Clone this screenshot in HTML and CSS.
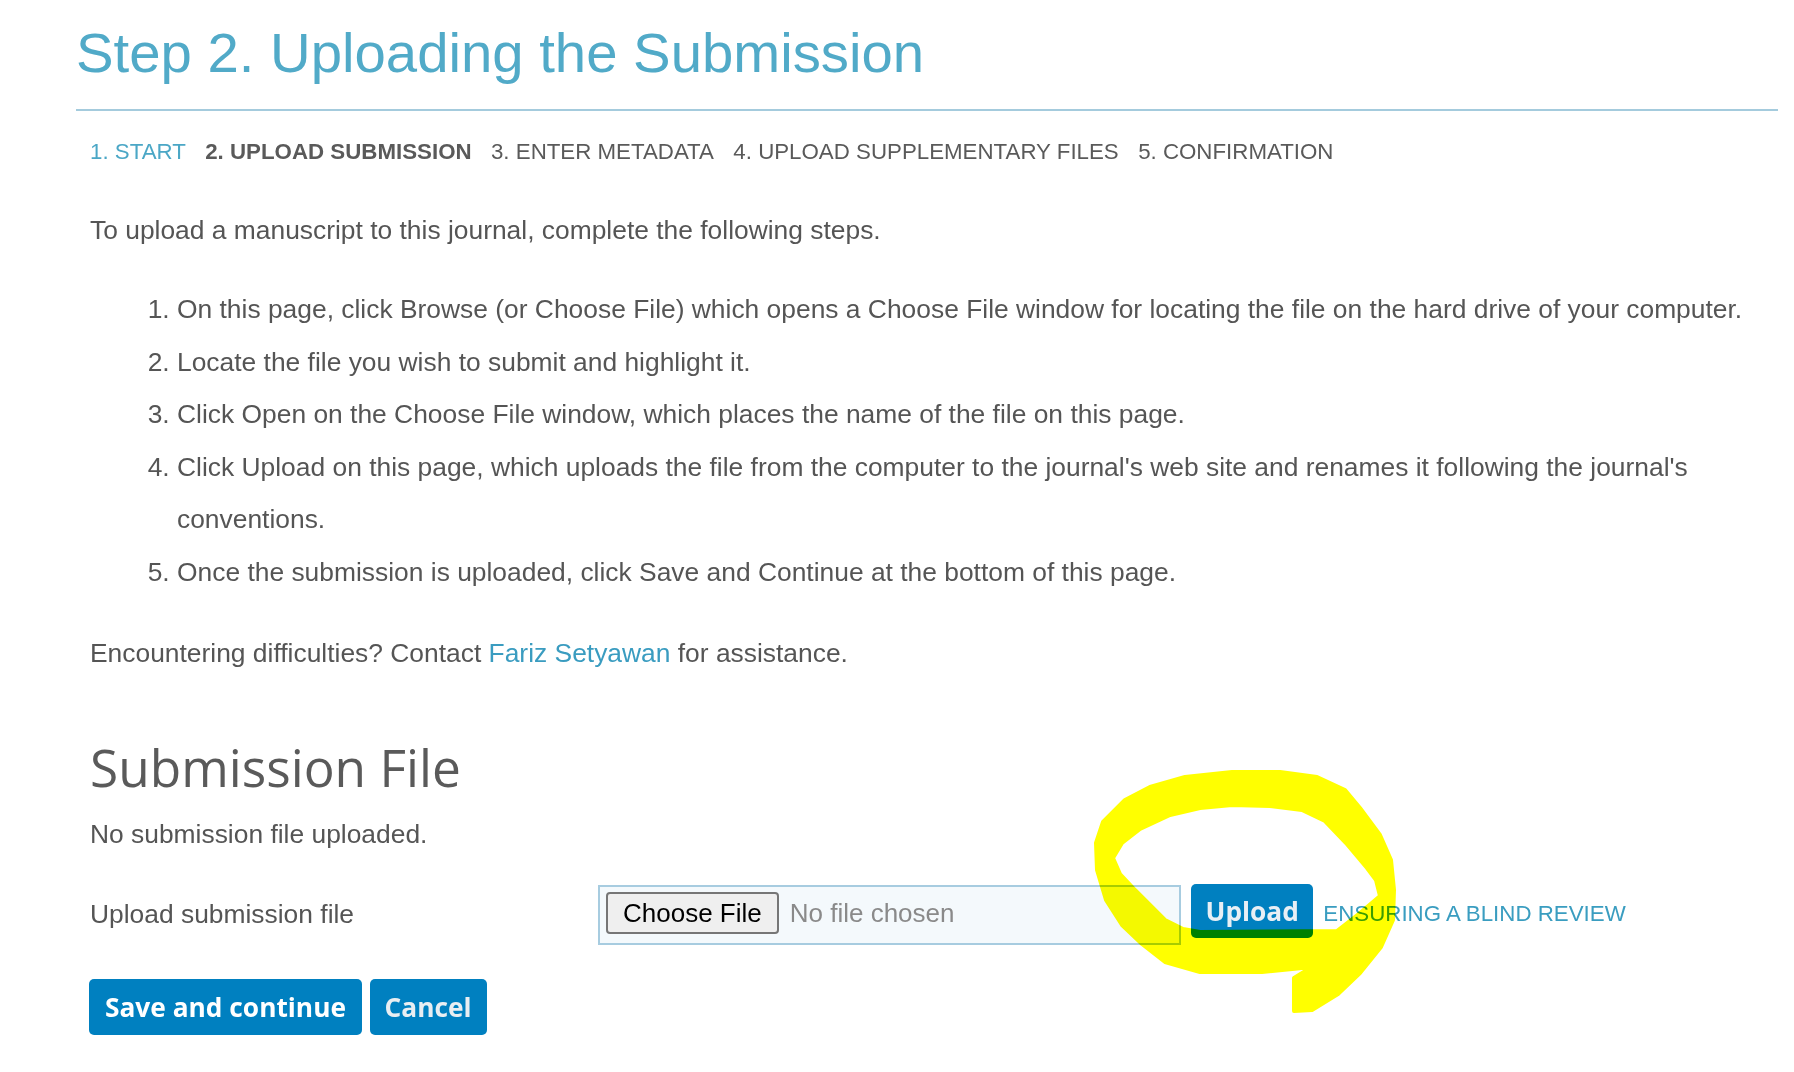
FILE: index.html
```html
<!DOCTYPE html>
<html lang="en">
<head>
<meta charset="utf-8">
<title>Step 2. Uploading the Submission</title>
<link rel="stylesheet" href="styles.css">
</head>
<body>
<div class="page">
  <h1 class="title">Step 2. Uploading the Submission</h1>
  <div class="content">
    <ul class="steps">
      <li class="step step-link">1. START</li>
      <li class="step step-current">2. UPLOAD SUBMISSION</li>
      <li class="step">3. ENTER METADATA</li>
      <li class="step">4. UPLOAD SUPPLEMENTARY FILES</li>
      <li class="step">5. CONFIRMATION</li>
    </ul>
    <p class="intro">To upload a manuscript to this journal, complete the following steps.</p>
    <ol class="instructions">
      <li>On this page, click Browse (or Choose File) which opens a Choose File window for locating the file on the hard drive of your computer.</li>
      <li>Locate the file you wish to submit and highlight it.</li>
      <li>Click Open on the Choose File window, which places the name of the file on this page.</li>
      <li>Click Upload on this page, which uploads the file from the computer to the journal's web site and renames it following the journal's conventions.</li>
      <li>Once the submission is uploaded, click Save and Continue at the bottom of this page.</li>
    </ol>
    <p class="contact">Encountering difficulties? Contact <a class="link" href="#">Fariz Setyawan</a> for assistance.</p>
    <h2 class="section-title">Submission File</h2>
    <p class="status">No submission file uploaded.</p>
    <div class="upload-row">
      <span class="upload-label">Upload submission file</span>
      <div class="file-box">
        <span class="file-btn">Choose File</span>
        <span class="file-name">No file chosen</span>
      </div>
      <button class="btn btn-upload" type="button">Upload</button>
      <a class="blind-link" href="#">ENSURING A BLIND REVIEW</a>
    </div>
    <div class="actions">
      <button class="btn btn-save" type="button">Save and continue</button>
      <button class="btn btn-cancel" type="button">Cancel</button>
    </div>
  </div>
</div>
<svg class="highlight" width="1794" height="1072" viewBox="0 0 1794 1072" aria-hidden="true">
  <path fill="#ffff00" stroke="#ffff00" stroke-width="4" stroke-linejoin="round" fill-rule="evenodd"
    d="M1232 772 L1280 772 L1317 777 L1345 790 L1360 808 L1380 835 L1391 860 L1394 890 L1393 920 L1381 947 L1360 973 L1338 994 L1312 1010 L1294 1011 L1294 978 L1312 967 L1262 972 L1200 972 L1165 962 L1142 944 L1122 925 L1106 900 L1097 870 L1096 843 L1103 822 L1125 800 L1150 787 L1185 777 Z
       M1232 805 L1200 808 L1170 815 L1140 829 L1122 843 L1113 858 L1120 874 L1135 890 L1150 905 L1165 920 L1183 929 L1200 932 L1337 931 L1360 913 L1380 896 L1376 880 L1367 868 L1346 843 L1325 821 L1302 810 L1270 806 Z"/>
</svg>
</body>
</html>
```

FILE: styles.css
```css
html, body {
  margin: 0;
  padding: 0;
  background: #ffffff;
}

body {
  font-family: "Liberation Sans", Arial, sans-serif;
  color: #555555;
}

.page {
  margin: 0 16px 0 76px;
}

.title {
  margin: 0;
  padding: 25px 0 28px;
  font-family: "Liberation Sans", Arial, sans-serif;
  font-size: 56.3px;
  line-height: 56px;
  font-weight: normal;
  color: #51aac8;
  border-bottom: 2px solid #a4cbdd;
}

.content {
  padding-left: 14px;
}

.steps {
  list-style: none;
  margin: 28px 0 0;
  padding: 0;
  display: flex;
  gap: 19.4px;
  font-size: 22.3px;
  line-height: 25px;
  color: #5a5a5a;
}

.step-link {
  color: #4ba7c6;
}

.step-current {
  font-weight: bold;
}

.intro {
  margin: 51px 0 0;
  font-size: 26.4px;
  line-height: 30px;
}

.instructions {
  margin: 38px 0 0;
  padding-left: 87px;
  font-size: 26.4px;
  line-height: 52.6px;
}

.contact {
  margin: 39.5px 0 0;
  font-size: 26.4px;
  line-height: 30px;
}

.link {
  color: #3a9cc0;
  text-decoration: none;
}

.section-title {
  margin: 69px 0 0;
  font-family: "Open Sans", "Noto Sans", sans-serif;
  font-weight: normal;
  font-size: 51.4px;
  line-height: 60px;
  color: #5a5a5a;
}

.status {
  margin: 22px 0 0;
  font-size: 26.4px;
  line-height: 30px;
}

.upload-row {
  margin-top: 34.7px;
  display: flex;
  align-items: flex-start;
}

.upload-label {
  width: 508px;
  flex: none;
  margin-top: 15px;
  font-size: 26.4px;
  line-height: 30px;
}

.file-box {
  box-sizing: border-box;
  width: 583px;
  height: 60px;
  margin-top: 1px;
  padding: 5px 0 0 6px;
  border: 2px solid #a7cce0;
  background: #f4f9fc;
  display: flex;
  align-items: flex-start;
}

.file-btn {
  box-sizing: border-box;
  height: 42px;
  padding: 0 15px;
  border: 2px solid #767676;
  border-radius: 4px;
  background: #efefef;
  color: #000000;
  font-size: 26px;
  line-height: 38px;
  white-space: nowrap;
}

.file-name {
  margin-left: 11px;
  font-size: 26px;
  line-height: 42px;
  color: #8a8a8a;
  white-space: nowrap;
}

.btn {
  font-family: "Open Sans", "Noto Sans", sans-serif;
  font-weight: 700;
  font-size: 26.3px;
  border: 0;
  border-radius: 5px;
  background: #0080c0;
  color: #ffffff;
  padding: 0 16px;
  margin: 0;
  cursor: pointer;
}

.btn-upload {
  margin-left: 10px;
  height: 54px;
  line-height: 54px;
  padding: 0 14.5px;
  color: #e8eff5;
}

.blind-link {
  margin-left: 10px;
  margin-top: 3px;
  font-size: 22.3px;
  line-height: 54px;
  color: #3a9dc0;
  text-decoration: none;
  white-space: nowrap;
}

.actions {
  margin-top: 34.3px;
  margin-left: -1px;
  display: flex;
  gap: 7.6px;
}

.btn-save,
.btn-cancel {
  height: 56px;
  line-height: 56px;
}

.btn-cancel {
  padding: 0 15px;
  color: #e9eef2;
}

.highlight {
  position: absolute;
  top: 0;
  left: 0;
  pointer-events: none;
  mix-blend-mode: multiply;
}
```
